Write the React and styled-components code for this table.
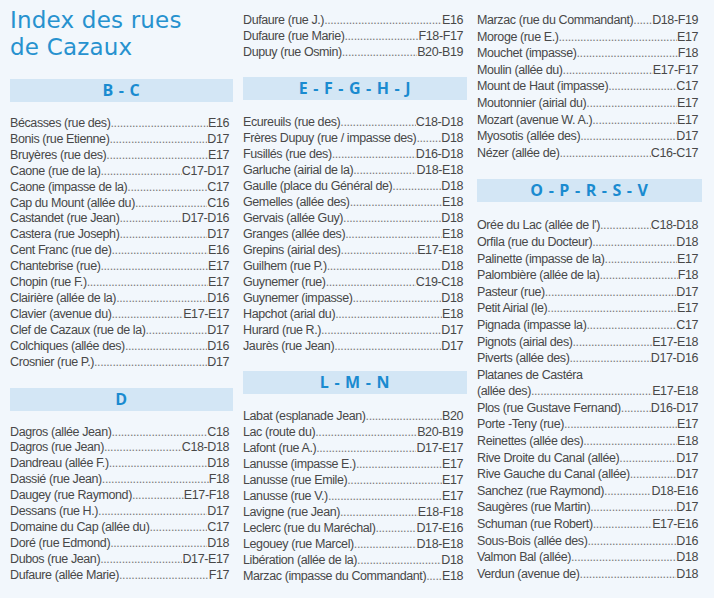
import React from "react";
import styled, { createGlobalStyle } from "styled-components";

const GlobalStyle = createGlobalStyle`
	* { box-sizing: border-box; }
	html, body { margin: 0; padding: 0; background: #f2f7fc; }
`;

const Page = styled.div`
	width: 714px;
	height: 598px;
	overflow: hidden;
	background: #f2f7fc;
	display: grid;
	grid-template-columns: 223px 224px 225px;
	column-gap: 10px;
	padding-left: 10px;
	font-family: "Liberation Sans", Arial, sans-serif;
`;

const Column = styled.div`
	display: flex;
	flex-direction: column;
	padding-top: ${props => props.$top}px;
	line-height: ${props => props.$lh}px;
`;

const Title = styled.h1`
	margin: 7px 0 1px;
	font-family: "DejaVu Sans", sans-serif;
	font-weight: 400;
	font-size: 23px;
	line-height: 27px;
	color: #2792cf;
	letter-spacing: 0.2px;
`;

const Bar = styled.div`
	height: 23px;
	margin: ${props => props.$space || "17px 0 14px"};
	background: #d3e6f5;
	color: #1a8bd0;
	font-family: "Open Sans", sans-serif;
	font-weight: 700;
	font-size: 16px;
	line-height: 23px;
	letter-spacing: 0.7px;
	text-align: center;
	white-space: pre;
`;

const Entry = styled.div`
	display: flex;
	align-items: baseline;
	padding-right: 4px;
	font-size: 12.5px;
	letter-spacing: -0.4px;
	color: #484848;
	white-space: nowrap;
`;

const Name = styled.span`
	flex: none;
`;

const Leader = styled.span`
	flex: 1;
	min-width: 6px;
	overflow: hidden;
	color: #7a7a7a;
	&::after {
		content: "........................................................................................................";
	}
`;

const Code = styled.span`
	flex: none;
`;

const col1 = [
	{ title: "B - C", space: "17px 0 14px", rows: [
		["Bécasses (rue des)", "E16"],
		["Bonis (rue Etienne)", "D17"],
		["Bruyères (rue des)", "E17"],
		["Caone (rue de la)", "C17-D17"],
		["Caone (impasse de la)", "C17"],
		["Cap du Mount (allée du)", "C16"],
		["Castandet (rue Jean)", "D17-D16"],
		["Castera (rue Joseph)", "D17"],
		["Cent Franc (rue de)", "E16"],
		["Chantebrise (rue)", "E17"],
		["Chopin (rue F.)", "E17"],
		["Clairière (allée de la)", "D16"],
		["Clavier (avenue du)", "E17-E17"],
		["Clef de Cazaux (rue de la)", "D17"],
		["Colchiques (allée des)", "D16"],
		["Crosnier (rue P.)", "D17"],
	]},
	{ title: "D", rows: [
		["Dagros (allée Jean)", "C18"],
		["Dagros (rue Jean)", "C18-D18"],
		["Dandreau (allée F.)", "D18"],
		["Dassié (rue Jean)", "F18"],
		["Daugey (rue Raymond)", "E17-F18"],
		["Dessans (rue H.)", "D17"],
		["Domaine du Cap (allée du)", "C17"],
		["Doré (rue Edmond)", "D18"],
		["Dubos (rue Jean)", "D17-E17"],
		["Dufaure (allée Marie)", "F17"],
	]},
];

const col2 = [
	{ rows: [
		["Dufaure (rue J.)", "E16"],
		["Dufaure (rue Marie)", "F18-F17"],
		["Dupuy (rue Osmin)", "B20-B19"],
	]},
	{ title: "E - F - G - H - J", rows: [
		["Ecureuils (rue des)", "C18-D18"],
		["Frères Dupuy (rue / impasse des)", "D18"],
		["Fusillés (rue des)", "D16-D18"],
		["Garluche (airial de la)", "D18-E18"],
		["Gaulle (place du Général de)", "D18"],
		["Gemelles (allée des)", "E18"],
		["Gervais (allée Guy)", "D18"],
		["Granges (allée des)", "E18"],
		["Grepins (airial des)", "E17-E18"],
		["Guilhem (rue P.)", "D18"],
		["Guynemer (rue)", "C19-C18"],
		["Guynemer (impasse)", "D18"],
		["Hapchot (arial du)", "E18"],
		["Hurard (rue R.)", "D17"],
		["Jaurès (rue Jean)", "D17"],
	]},
	{ title: "L - M - N", rows: [
		["Labat (esplanade Jean)", "B20"],
		["Lac (route du)", "B20-B19"],
		["Lafont (rue A.)", "D17-E17"],
		["Lanusse (impasse E.)", "E17"],
		["Lanusse (rue Emile)", "E17"],
		["Lanusse (rue V.)", "E17"],
		["Lavigne (rue Jean)", "E18-F18"],
		["Leclerc (rue du Maréchal)", "D17-E16"],
		["Legouey (rue Marcel)", "D18-E18"],
		["Libération (allée de la)", "D18"],
		["Marzac (impasse du Commandant)", "E18"],
	]},
];

const col3 = [
	{ rows: [
		["Marzac (rue du Commandant)", "D18-F19"],
		["Moroge (rue E.)", "E17"],
		["Mouchet (impasse)", "F18"],
		["Moulin (allée du)", "E17-F17"],
		["Mount de Haut (impasse)", "C17"],
		["Moutonnier (airial du)", "E17"],
		["Mozart (avenue W. A.)", "E17"],
		["Myosotis (allée des)", "D17"],
		["Nézer (allée de)", "C16-C17"],
	]},
	{ title: "O - P - R - S - V", space: "18px 0 15px", rows: [
		["Orée du Lac (allée de l')", "C18-D18"],
		["Orfila (rue du Docteur)", "D18"],
		["Palinette (impasse de la)", "E17"],
		["Palombière (allée de la)", "F18"],
		["Pasteur (rue)", "D17"],
		["Petit Airial (le)", "E17"],
		["Pignada (impasse la)", "C17"],
		["Pignots (airial des)", "E17-E18"],
		["Piverts (allée des)", "D17-D16"],
		["Platanes de Castéra", null],
		["(allée des)", "E17-E18"],
		["Plos (rue Gustave Fernand)", "D16-D17"],
		["Porte -Teny (rue)", "E17"],
		["Reinettes (allée des)", "E18"],
		["Rive Droite du Canal (allée)", "D17"],
		["Rive Gauche du Canal (allée)", "D17"],
		["Sanchez (rue Raymond)", "D18-E16"],
		["Saugères (rue Martin)", "D17"],
		["Schuman (rue Robert)", "E17-E16"],
		["Sous-Bois (allée des)", "D16"],
		["Valmon Bal (allée)", "D18"],
		["Verdun (avenue de)", "D18"],
	]},
];

const Street = ({ name, code }) => (
	<Entry>
		<Name>{name}</Name>
		{code && <Leader />}
		{code && <Code>{code}</Code>}
	</Entry>
);

const Sections = ({ sections }) => sections.map((section, i) => (
	<React.Fragment key={i}>
		{section.title && <Bar $space={section.space}>{section.title}</Bar>}
		{section.rows.map(([name, code]) => <Street key={name} name={name} code={code} />)}
	</React.Fragment>
));

const App = () => (
	<>
		<GlobalStyle />
		<Page>
			<Column $top={0} $lh={15.9}>
				<Title>Index des rues<br />de Cazaux</Title>
				<Sections sections={col1} />
			</Column>
			<Column $top={12} $lh={16}>
				<Sections sections={col2} />
			</Column>
			<Column $top={12} $lh={16.6}>
				<Sections sections={col3} />
			</Column>
		</Page>
	</>
);

export default App;
